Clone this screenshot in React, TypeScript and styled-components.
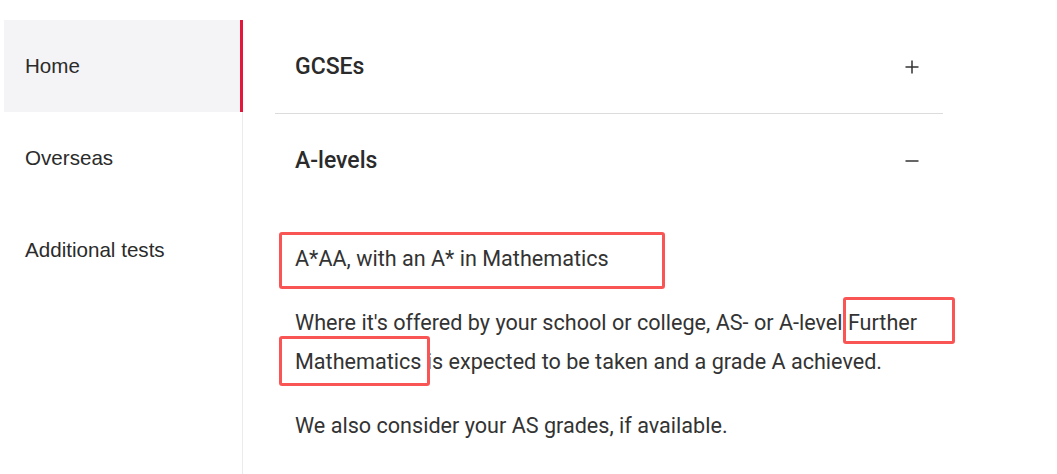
import styled, { createGlobalStyle } from "styled-components";

const GlobalStyle = createGlobalStyle`
  body {
    margin: 0;
    background: #ffffff;
    font-family: Roboto, "Liberation Sans", sans-serif;
    color: #333333;
  }
`;

const Page = styled.div`
  position: relative;
  display: flex;
  padding-top: 20px;
  height: 474px;
  box-sizing: border-box;
  overflow: hidden;
`;

const Sidebar = styled.nav`
  display: flex;
  flex-direction: column;
  width: 238px;
  margin-left: 4px;
  border-right: 1px solid #ebebeb;
`;

const NavItem = styled.a<{ $active?: boolean }>`
  display: flex;
  align-items: center;
  height: 92px;
  padding-left: 21px;
  font-family: "Liberation Sans", Arial, sans-serif;
  font-size: 20.6px;
  color: #2b2b2b;
  text-decoration: none;
  background: ${(p) => (p.$active ? "#f4f4f6" : "transparent")};
  box-shadow: ${(p) => (p.$active ? "inset -3px 0 0 #e2173b" : "none")};
  margin-right: ${(p) => (p.$active ? "-1px" : "0")};
`;

const Main = styled.main`
  padding-left: 32px;
`;

const Accordion = styled.div`
  width: 668px;
`;

const Item = styled.section<{ $divider?: boolean }>`
  border-bottom: ${(p) => (p.$divider ? "1px solid #dcdcdc" : "none")};
`;

const Header = styled.button`
  display: flex;
  align-items: center;
  justify-content: space-between;
  width: 100%;
  height: 93px;
  padding: 0 14px 0 20px;
  border: none;
  background: none;
  font-family: Roboto, "Liberation Sans", sans-serif;
  font-size: 23px;
  font-weight: 500;
  color: #2b2b2b;
  cursor: pointer;
`;

const Toggle = styled.span`
  display: flex;
  width: 34px;
  justify-content: center;
  color: #333;
`;

const Panel = styled.div`
  position: relative;
  padding: 32px 20px 0 20px;
  font-size: 21.6px;
  line-height: 39px;
  color: #333333;

  p {
    margin: 0 0 25px;
  }
`;

const Mark = styled.div`
  position: absolute;
  border: 3px solid #fa5555;
  border-radius: 3px;
`;

const Plus = () => (
  <svg width="14" height="14" viewBox="0 0 14 14">
    <path d="M7 0.5v13M0.5 7h13" stroke="#333" strokeWidth="1.5" />
  </svg>
);

const Minus = () => (
  <svg width="14" height="14" viewBox="0 0 14 14">
    <path d="M0.5 7h13" stroke="#333" strokeWidth="1.5" />
  </svg>
);

export default function App() {
  return (
    <>
      <GlobalStyle />
      <Page>
        <Sidebar>
          <NavItem $active href="#">Home</NavItem>
          <NavItem href="#">Overseas</NavItem>
          <NavItem href="#">Additional tests</NavItem>
        </Sidebar>
        <Main>
          <Accordion>
            <Item $divider>
              <Header>
                GCSEs
                <Toggle>
                  <Plus />
                </Toggle>
              </Header>
            </Item>
            <Item>
              <Header>
                A-levels
                <Toggle>
                  <Minus />
                </Toggle>
              </Header>
              <Panel>
                <p>A*AA, with an A* in Mathematics</p>
                <p>
                  Where it's offered by your school or college, AS- or A-level Further
                  Mathematics is expected to be taken and a grade A achieved.
                </p>
                <p>We also consider your AS grades, if available.</p>
                <Mark style={{ left: 4, top: 25, width: 380, height: 51 }} />
                <Mark style={{ left: 568, top: 90, width: 106, height: 41 }} />
                <Mark style={{ left: 4, top: 129, width: 145, height: 44 }} />
              </Panel>
            </Item>
          </Accordion>
        </Main>
      </Page>
    </>
  );
}
